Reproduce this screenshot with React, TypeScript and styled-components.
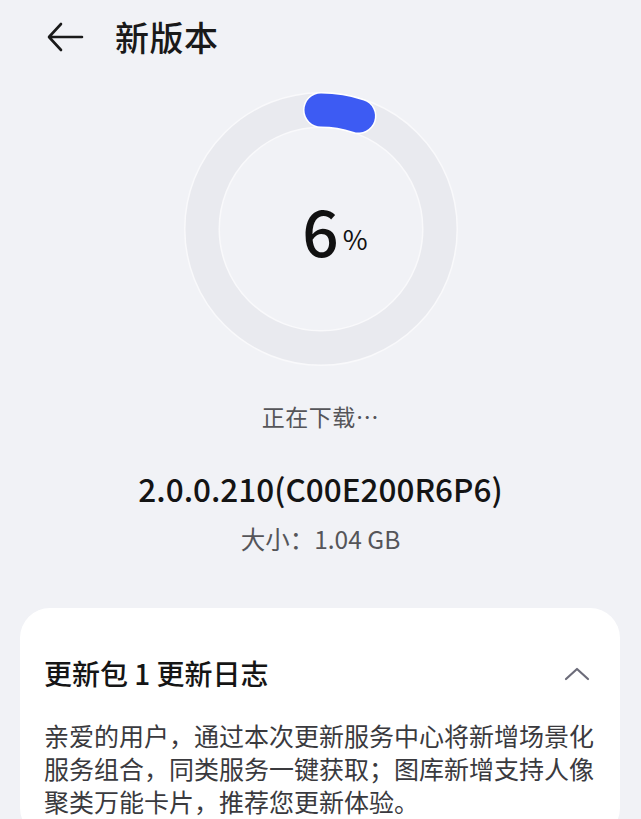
import React from 'react';
import styled, { createGlobalStyle } from 'styled-components';

const GlobalStyle = createGlobalStyle`
  html, body {
    margin: 0;
    padding: 0;
    background: #f1f2f6;
  }
  body {
    font-family: "Noto Sans CJK SC", "Noto Sans", sans-serif;
    color: #191919;
  }
`;

const Page = styled.div`
  width: 641px;
  min-height: 819px;
  background: #f1f2f6;
  display: flex;
  flex-direction: column;
  overflow: hidden;
`;

const Header = styled.div`
  display: flex;
  align-items: center;
  height: 46px;
  padding: 14px 0 0 46px;
`;

const BackButton = styled.button`
  display: flex;
  align-items: center;
  border: 0;
  padding: 0;
  background: none;
  width: 38px;
  height: 32px;
  margin-right: 31px;
  color: #1a1a1a;
`;

const Title = styled.h1`
  margin: 0;
  font-size: 34px;
  font-weight: 500;
  letter-spacing: 0.5px;
  line-height: 1;
`;

const Progress = styled.div`
  display: flex;
  flex-direction: column;
  align-items: center;
  margin-top: 32px;
`;

const RingWrap = styled.div`
  position: relative;
  width: 274px;
  height: 274px;
`;

const RingLabel = styled.div`
  position: absolute;
  inset: 0;
  display: flex;
  align-items: center;
  justify-content: center;
`;

const Number = styled.span`
  position: relative;
  font-size: 64px;
  font-weight: 500;
  line-height: 1;
  color: #111;
`;

const Percent = styled.span`
  position: absolute;
  left: 100%;
  bottom: 9px;
  margin-left: 4px;
  font-size: 27px;
  font-weight: 400;
  line-height: 1;
`;

const Status = styled.div`
  margin-top: 33px;
  font-size: 23px;
  color: #555559;
  letter-spacing: 0.5px;
`;

const Version = styled.div`
  margin-top: 32px;
  font-size: 31.5px;
  font-weight: 500;
  color: #141414;
`;

const Size = styled.div`
  margin-top: 10px;
  font-size: 24.5px;
  color: #555559;
`;

const Card = styled.section`
  margin: 52px 21px 0 20px;
  background: #ffffff;
  border-radius: 30px;
  padding: 49px 24px 20px 24px;
`;

const CardHead = styled.div`
  display: flex;
  align-items: center;
  justify-content: space-between;
`;

const CardTitle = styled.h2`
  margin: 0;
  font-size: 28px;
  font-weight: 500;
  color: #151515;
  line-height: 1.2;
`;

const Chevron = styled.span`
  display: flex;
  margin-right: 6px;
  color: #6c6c7a;
`;

const Notes = styled.p`
  width: 552px;
  margin: 28px 0 0 0;
  font-size: 25px;
  line-height: 33px;
  color: #3a3a3e;
`;

const R = 119;
const CX = 137;
const CY = 137;

function arcPath (fraction: number) {
  const a0 = -Math.PI / 2;
  const a1 = a0 + fraction * Math.PI * 2;
  const x0 = CX + R * Math.cos(a0);
  const y0 = CY + R * Math.sin(a0);
  const x1 = CX + R * Math.cos(a1);
  const y1 = CY + R * Math.sin(a1);
  const large = fraction > 0.5 ? 1 : 0;

  return `M ${x0} ${y0} A ${R} ${R} 0 ${large} 1 ${x1} ${y1}`;
}

function Ring ({ value }: { value: number }) {
  const d = arcPath(value / 100 * 0.85);

  return (
    <svg width='274' height='274' viewBox='0 0 274 274'>
      <circle cx={CX} cy={CY} r={R} fill='none' stroke='#f9f9fb' strokeWidth='36' />
      <circle cx={CX} cy={CY} r={R} fill='none' stroke='#e9eaef' strokeWidth='33' />
      <path d={d} fill='none' stroke='#ffffff' strokeWidth='36' strokeLinecap='round' />
      <path d={d} fill='none' stroke='#3d5bf3' strokeWidth='33' strokeLinecap='round' />
    </svg>
  );
}

export default function App () {
  const percent = 6;

  return (
    <Page>
      <GlobalStyle />
      <Header>
        <BackButton aria-label='back'>
          <svg width='38' height='32' viewBox='0 0 38 32' fill='none'>
            <path d='M36 16 H4 M15 3 L3 16 L15 29' stroke='currentColor' strokeWidth='2.6' strokeLinecap='round' strokeLinejoin='round' />
          </svg>
        </BackButton>
        <Title>新版本</Title>
      </Header>

      <Progress>
        <RingWrap>
          <Ring value={percent} />
          <RingLabel>
            <Number>
              {percent}
              <Percent>%</Percent>
            </Number>
          </RingLabel>
        </RingWrap>
        <Status>正在下载…</Status>
        <Version>2.0.0.210(C00E200R6P6)</Version>
        <Size>大小：1.04 GB</Size>
      </Progress>

      <Card>
        <CardHead>
          <CardTitle>更新包 1 更新日志</CardTitle>
          <Chevron>
            <svg width='26' height='14' viewBox='0 0 26 14' fill='none'>
              <path d='M2 12 L13 2 L24 12' stroke='currentColor' strokeWidth='2.2' strokeLinecap='round' strokeLinejoin='round' />
            </svg>
          </Chevron>
        </CardHead>
        <Notes>
          亲爱的用户，通过本次更新服务中心将新增场景化服务组合，同类服务一键获取；图库新增支持人像聚类万能卡片，推荐您更新体验。
        </Notes>
      </Card>
    </Page>
  );
}
